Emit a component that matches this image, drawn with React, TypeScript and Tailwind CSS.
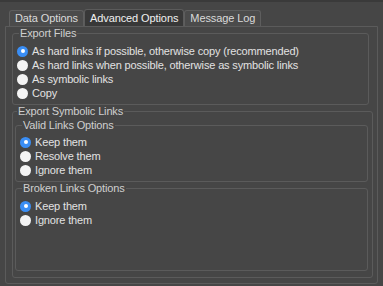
import React from "react";

const font = { fontFamily: '"Lucida Grande", "Liberation Sans", Arial, sans-serif' };

function Radio({ label, checked }: { label: string; checked?: boolean }) {
  return (
    <label className="flex items-center gap-[4px] h-[14px] text-[11px] tracking-[-0.15px] text-[#e2e2e2]">
      {checked ? (
        <span className="w-[11px] h-[11px] rounded-full bg-[#3a8ef5] flex items-center justify-center shrink-0">
          <span className="w-[4px] h-[4px] rounded-full bg-white" />
        </span>
      ) : (
        <span className="w-[11px] h-[11px] rounded-full bg-[#f4f4f4] shrink-0" />
      )}
      <span className="leading-[14px]">{label}</span>
    </label>
  );
}

function Group({
  title,
  className,
  children,
}: {
  title: string;
  className?: string;
  children: React.ReactNode;
}) {
  return (
    <fieldset className={`border border-[#5b5b5b] rounded-[3px] ${className ?? ""}`}>
      <legend className="ml-[2px] px-[1px] text-[11px] leading-[13px] tracking-[-0.15px] text-[#cfcfcf]">
        {title}
      </legend>
      {children}
    </fieldset>
  );
}

export default function App() {
  const tabs = [
    { label: "Data Options", active: false },
    { label: "Advanced Options", active: true },
    { label: "Message Log", active: false },
  ];

  return (
    <div className="w-[383px] h-[286px] bg-[#464646] overflow-hidden flex flex-col" style={font}>
      {/* window strip */}
      <div className="h-[2px] bg-[#3a3a3a] shrink-0" />

      {/* Tabs */}
      <div className="flex items-end pl-[9px] h-[24px] shrink-0">
        {tabs.map((t) =>
          t.active ? (
            <div
              key={t.label}
              className="h-[17px] px-[5px] flex items-center bg-[#383838] border border-b-0 border-[#5b5b5b] rounded-t-[3px] text-[11px] tracking-[-0.1px] text-[#f0f0f0]"
            >
              {t.label}
            </div>
          ) : (
            <div
              key={t.label}
              className="h-[16px] px-[5px] flex items-center bg-[#4b4b4b] border border-b-0 border-[#5e5e5e] rounded-t-[3px] text-[11px] tracking-[-0.1px] text-[#dadada]"
            >
              {t.label}
            </div>
          )
        )}
      </div>

      {/* Tab pane */}
      <div className="mx-[5px] h-[258px] shrink-0 border border-[#5b5b5b] rounded-b-[3px] pl-[6px] pr-[8px] flex flex-col">
        <Group title="Export Files" className="h-[78px] shrink-0 pl-[4px] pt-[4px]">
          <Radio label="As hard links if possible, otherwise copy (recommended)" checked />
          <Radio label="As hard links when possible, otherwise as symbolic links" />
          <Radio label="As symbolic links" />
          <Radio label="Copy" />
        </Group>

        <Group
          title="Export Symbolic Links"
          className="h-[173px] shrink-0 -mr-[4px] pl-[2px] pr-[4px] flex flex-col"
        >
          <Group title="Valid Links Options" className="mt-[1px] h-[63px] shrink-0 pl-[4px] pt-[3px]">
            <Radio label="Keep them" checked />
            <Radio label="Resolve them" />
            <Radio label="Ignore them" />
          </Group>
          <Group title="Broken Links Options" className="h-[89px] shrink-0 pl-[4px] pt-[4px]">
            <Radio label="Keep them" checked />
            <Radio label="Ignore them" />
          </Group>
        </Group>
      </div>
    </div>
  );
}
